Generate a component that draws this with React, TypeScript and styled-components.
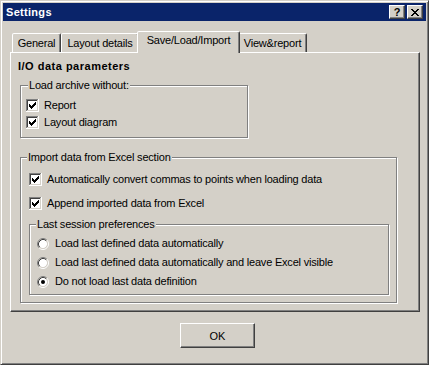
import React from 'react';
import styled, { createGlobalStyle } from 'styled-components';

const GlobalStyle = createGlobalStyle`
  html, body {
    margin: 0;
    padding: 0;
    background: #d4d0c8;
  }
  body {
    font-family: 'Liberation Sans', Arial, sans-serif;
    font-size: 11px;
    color: #000;
  }
  * {
    box-sizing: border-box;
  }
`;

const tabs = [
  { label: 'General', width: 49 },
  { label: 'Layout details', width: 78 },
  { label: 'Save/Load/Import', width: 99, active: true },
  { label: 'View&report', width: 69 },
];

const CheckBox = ({ checked }: { checked: boolean }) => (
  <BoxIcon width='13' height='13' viewBox='0 0 13 13' shapeRendering='crispEdges'>
    <path d='M0 0h12v1H1v11H0z' fill='#808080' />
    <path d='M12 0h1v13H0v-1h12z' fill='#ffffff' />
    <path d='M1 1h10v1H2v9H1z' fill='#404040' />
    <path d='M11 1h1v11H1v-1h10z' fill='#d4d0c8' />
    <rect x='2' y='2' width='9' height='9' fill='#ffffff' />
    {checked && (
      <path
        d='M9 3h1v1H9z M8 4h2v1H8z M3 5h1v1H3z M7 5h3v1H7z M3 6h2v1H3z M6 6h3v1H6z M3 7h5v1H3z M4 8h3v1H4z M5 9h1v1H5z'
        fill='#000000'
      />
    )}
  </BoxIcon>
);

const Radio = ({ checked }: { checked: boolean }) => (
  <BoxIcon width='12' height='12' viewBox='0 0 12 12'>
    <circle cx='6' cy='6' r='4.2' fill='#ffffff' />
    <path d='M2.11 9.89A5.5 5.5 0 0 1 9.89 2.11' fill='none' stroke='#808080' />
    <path d='M9.89 2.11A5.5 5.5 0 0 1 2.11 9.89' fill='none' stroke='#ffffff' />
    <path d='M2.82 9.18A4.5 4.5 0 0 1 9.18 2.82' fill='none' stroke='#404040' />
    <path d='M9.18 2.82A4.5 4.5 0 0 1 2.82 9.18' fill='none' stroke='#d4d0c8' />
    {checked && <circle cx='6' cy='6' r='2' fill='#000000' />}
  </BoxIcon>
);

const App = () => {
  return (
    <>
      <GlobalStyle />
      <Window>
        <TitleBar>
          <TitleText>Settings</TitleText>
          <CaptionButtons>
            <CaptionButton type='button' title='Help'>
              ?
            </CaptionButton>
            <CaptionButton type='button' title='Close'>
              <svg width='8' height='7' viewBox='0 0 8 7' shapeRendering='crispEdges'>
                <path
                  d='M0 0h2v1H0z M6 0h2v1H6z M1 1h2v1H1z M5 1h2v1H5z M2 2h4v1H2z M3 3h2v1H3z M2 4h4v1H2z M1 5h2v1H1z M5 5h2v1H5z M0 6h2v1H0z M6 6h2v1H6z'
                  fill='#000000'
                />
              </svg>
            </CaptionButton>
          </CaptionButtons>
        </TitleBar>

        <Body>
          <TabStrip>
            {tabs.map((oTab) => (
              <Tab key={oTab.label} $width={oTab.width} $active={!!oTab.active}>
                {oTab.label}
              </Tab>
            ))}
          </TabStrip>

          <Panel>
            <Heading>I/O data parameters</Heading>

            <Group $width={228} $pad='5px 0 6px 5px' $shift={2}>
              <Legend>Load archive without:</Legend>
              <Options $gap={0}>
                <OptionRow $height={17}>
                  <CheckBox checked />
                  Report
                </OptionRow>
                <OptionRow $height={17}>
                  <CheckBox checked />
                  Layout diagram
                </OptionRow>
              </Options>
            </Group>

            <Group $width={377} $pad='7px 0 7px 8px' $shift={-2} $top={13}>
              <Legend>Import data from Excel section</Legend>
              <Options $gap={7}>
                <OptionRow $height={17}>
                  <CheckBox checked />
                  Automatically convert commas to points when loading data
                </OptionRow>
                <OptionRow $height={17}>
                  <CheckBox checked />
                  Append imported data from Excel
                </OptionRow>
              </Options>

              <Group $width={360} $pad='3px 0 3px 7px' $shift={-1} $top={6} $left={0}>
                <Legend>Last session preferences</Legend>
                <Options $gap={0}>
                  <OptionRow $height={19} $spacing={6}>
                    <Radio checked={false} />
                    Load last defined data automatically
                  </OptionRow>
                  <OptionRow $height={19} $spacing={6}>
                    <Radio checked={false} />
                    Load last defined data automatically and leave Excel visible
                  </OptionRow>
                  <OptionRow $height={19} $spacing={6}>
                    <Radio checked />
                    Do not load last data definition
                  </OptionRow>
                </Options>
              </Group>
            </Group>
          </Panel>

          <Footer>
            <PushButton type='button'>OK</PushButton>
          </Footer>
        </Body>
      </Window>
    </>
  );
};

const Window = styled.div`
  width: 429px;
  height: 365px;
  padding: 2px;
  display: flex;
  flex-direction: column;
  background: #d4d0c8;
  border: 1px solid;
  border-color: #d4d0c8 #404040 #404040 #d4d0c8;
  box-shadow: inset 1px 1px #ffffff, inset -1px -1px #808080;
`;

const TitleBar = styled.div`
  height: 18px;
  display: flex;
  align-items: center;
  justify-content: space-between;
  padding: 0 3px;
  background: #0a246a;
`;

const TitleText = styled.span`
  color: #ffffff;
  font-weight: 700;
  font-size: 11px;
  letter-spacing: 0.3px;
`;

const CaptionButtons = styled.div`
  display: flex;
  gap: 2px;
`;

const CaptionButton = styled.button`
  width: 16px;
  height: 14px;
  padding: 0;
  display: flex;
  align-items: center;
  justify-content: center;
  background: #d4d0c8;
  border: 1px solid;
  border-color: #ffffff #404040 #404040 #ffffff;
  box-shadow: inset -1px -1px #808080;
  font-family: 'Liberation Sans', Arial, sans-serif;
  font-weight: 700;
  font-size: 11px;
  line-height: 12px;
  color: #000;
`;

const Body = styled.div`
  flex: 1;
  display: flex;
  flex-direction: column;
  padding: 0 6px 0 7px;
`;

const TabStrip = styled.div`
  position: relative;
  z-index: 1;
  height: 21px;
  margin-top: 10px;
  padding-left: 2px;
  display: flex;
  align-items: flex-end;
`;

const Tab = styled.div<{ $width: number; $active: boolean }>`
  position: relative;
  z-index: ${(p) => (p.$active ? 2 : 1)};
  width: ${(p) => p.$width + (p.$active ? 4 : 0)}px;
  height: ${(p) => (p.$active ? 22 : 19)}px;
  margin: ${(p) => (p.$active ? '0 -2px -1px' : '0')};
  padding-top: ${(p) => (p.$active ? 2 : 3)}px;
  text-align: center;
  line-height: 13px;
  letter-spacing: -0.2px;
  white-space: nowrap;
  background: #d4d0c8;
  border: 1px solid;
  border-bottom: none;
  border-color: #ffffff #404040 transparent #ffffff;
  border-radius: 2px 2px 0 0;
  box-shadow: inset -1px 0 #808080;
`;

const Panel = styled.div`
  height: 260px;
  padding: 7px 0 0 7px;
  border: 1px solid;
  border-color: #ffffff #404040 #404040 #ffffff;
  box-shadow: inset -1px -1px #808080;
`;

const Heading = styled.div`
  font-weight: 700;
  line-height: 13px;
  letter-spacing: 0.5px;
  margin-bottom: 6px;
`;

const Group = styled.fieldset<{
  $width: number;
  $pad: string;
  $shift: number;
  $top?: number;
  $left?: number;
}>`
  width: ${(p) => p.$width}px;
  min-inline-size: 0;
  margin: ${(p) => p.$top ?? 0}px 0 0 ${(p) => p.$left ?? 2}px;
  padding: ${(p) => p.$pad};
  border: 1px solid #808080;
  box-shadow: inset 1px 1px #ffffff, 1px 1px #ffffff;

  & > legend {
    margin-left: ${(p) => p.$shift}px;
  }
`;

const Legend = styled.legend`
  padding: 0 1px;
  line-height: 13px;
  letter-spacing: -0.2px;
  background: #d4d0c8;
`;

const Options = styled.div<{ $gap: number }>`
  display: flex;
  flex-direction: column;
  gap: ${(p) => p.$gap}px;
`;

const OptionRow = styled.label<{ $height: number; $spacing?: number }>`
  height: ${(p) => p.$height}px;
  display: flex;
  align-items: center;
  gap: ${(p) => p.$spacing ?? 5}px;
  line-height: 13px;
  letter-spacing: -0.2px;
  white-space: nowrap;
`;

const BoxIcon = styled.svg`
  display: block;
  flex: none;
`;

const Footer = styled.div`
  display: flex;
  justify-content: center;
  padding-left: 5px;
  margin-top: 11px;
`;

const PushButton = styled.button`
  width: 75px;
  height: 25px;
  padding: 0;
  background: #d4d0c8;
  border: 1px solid;
  border-color: #ffffff #404040 #404040 #ffffff;
  box-shadow: inset -1px -1px #808080;
  font-family: 'Liberation Sans', Arial, sans-serif;
  font-size: 11px;
  color: #000;
`;

export default App;
